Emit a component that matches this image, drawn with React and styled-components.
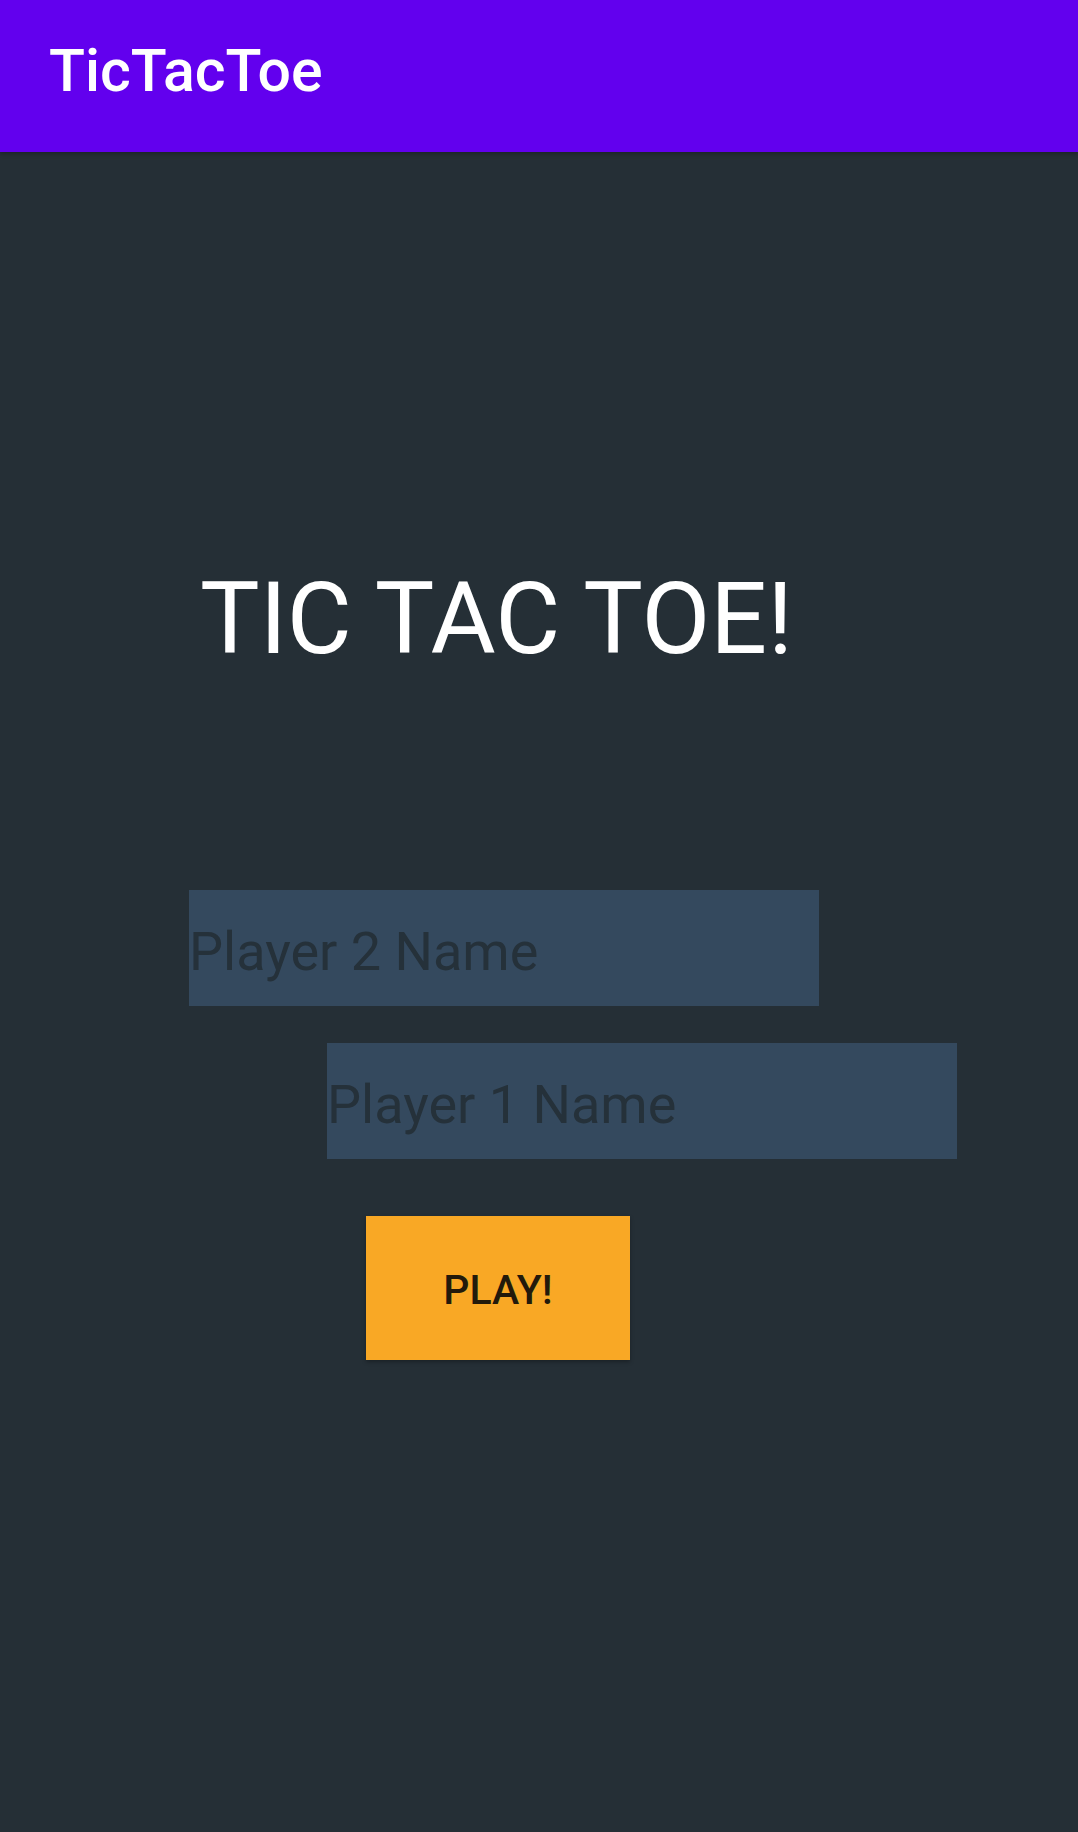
import React from "react";
import styled, { createGlobalStyle } from "styled-components";

const Global = createGlobalStyle`
  html, body { margin: 0; padding: 0; }
  body {
    background: #252f36;
    font-family: Roboto, "Noto Sans", "Liberation Sans", sans-serif;
  }
  * { box-sizing: border-box; }
`;

const Screen = styled.div`
  width: 1078px;
  min-height: 1832px;
  background: #252f36;
  display: flex;
  flex-direction: column;
`;

const AppBar = styled.header`
  height: 152px;
  background: #6200ee;
  padding: 41px 0 0 49px;
  box-shadow: 0 2px 4px rgba(0, 0, 0, 0.25);
`;

const AppTitle = styled.h1`
  margin: 0;
  font-size: 59px;
  line-height: 59px;
  font-weight: 500;
  color: #ffffff;
`;

const Main = styled.main`
  display: flex;
  flex-direction: column;
  align-items: flex-start;
`;

const Headline = styled.h2`
  margin: 417px 0 0 200px;
  font-size: 100px;
  line-height: 100px;
  font-weight: 400;
  color: #ffffff;
  white-space: nowrap;
`;

const NameField = styled.input`
  margin: ${(p) => p.$top}px 0 0 ${(p) => p.$left}px;
  width: 630px;
  height: 116px;
  padding: 6px 0 0;
  border: none;
  outline: none;
  background: #34495e;
  font-family: Roboto, "Noto Sans", "Liberation Sans", sans-serif;
  font-size: 54px;
  color: #ffffff;
  &::placeholder {
    color: #25313a;
    opacity: 1;
  }
`;

const PlayButton = styled.button`
  margin: 57px 0 0 366px;
  width: 264px;
  height: 144px;
  border: none;
  background: #f9a825;
  color: #231a0b;
  font-family: Roboto, "Noto Sans", "Liberation Sans", sans-serif;
  font-size: 41px;
  font-weight: 500;
  padding: 4px 0 0;
  box-shadow: 0 2px 4px rgba(0, 0, 0, 0.3);
`;

export default function App() {
  return (
    <Screen>
      <Global />
      <AppBar>
        <AppTitle>TicTacToe</AppTitle>
      </AppBar>
      <Main>
        <Headline>TIC TAC TOE!</Headline>
        <NameField $top={221} $left={189} placeholder="Player 2 Name" />
        <NameField $top={37} $left={327} placeholder="Player 1 Name" />
        <PlayButton>PLAY!</PlayButton>
      </Main>
    </Screen>
  );
}
